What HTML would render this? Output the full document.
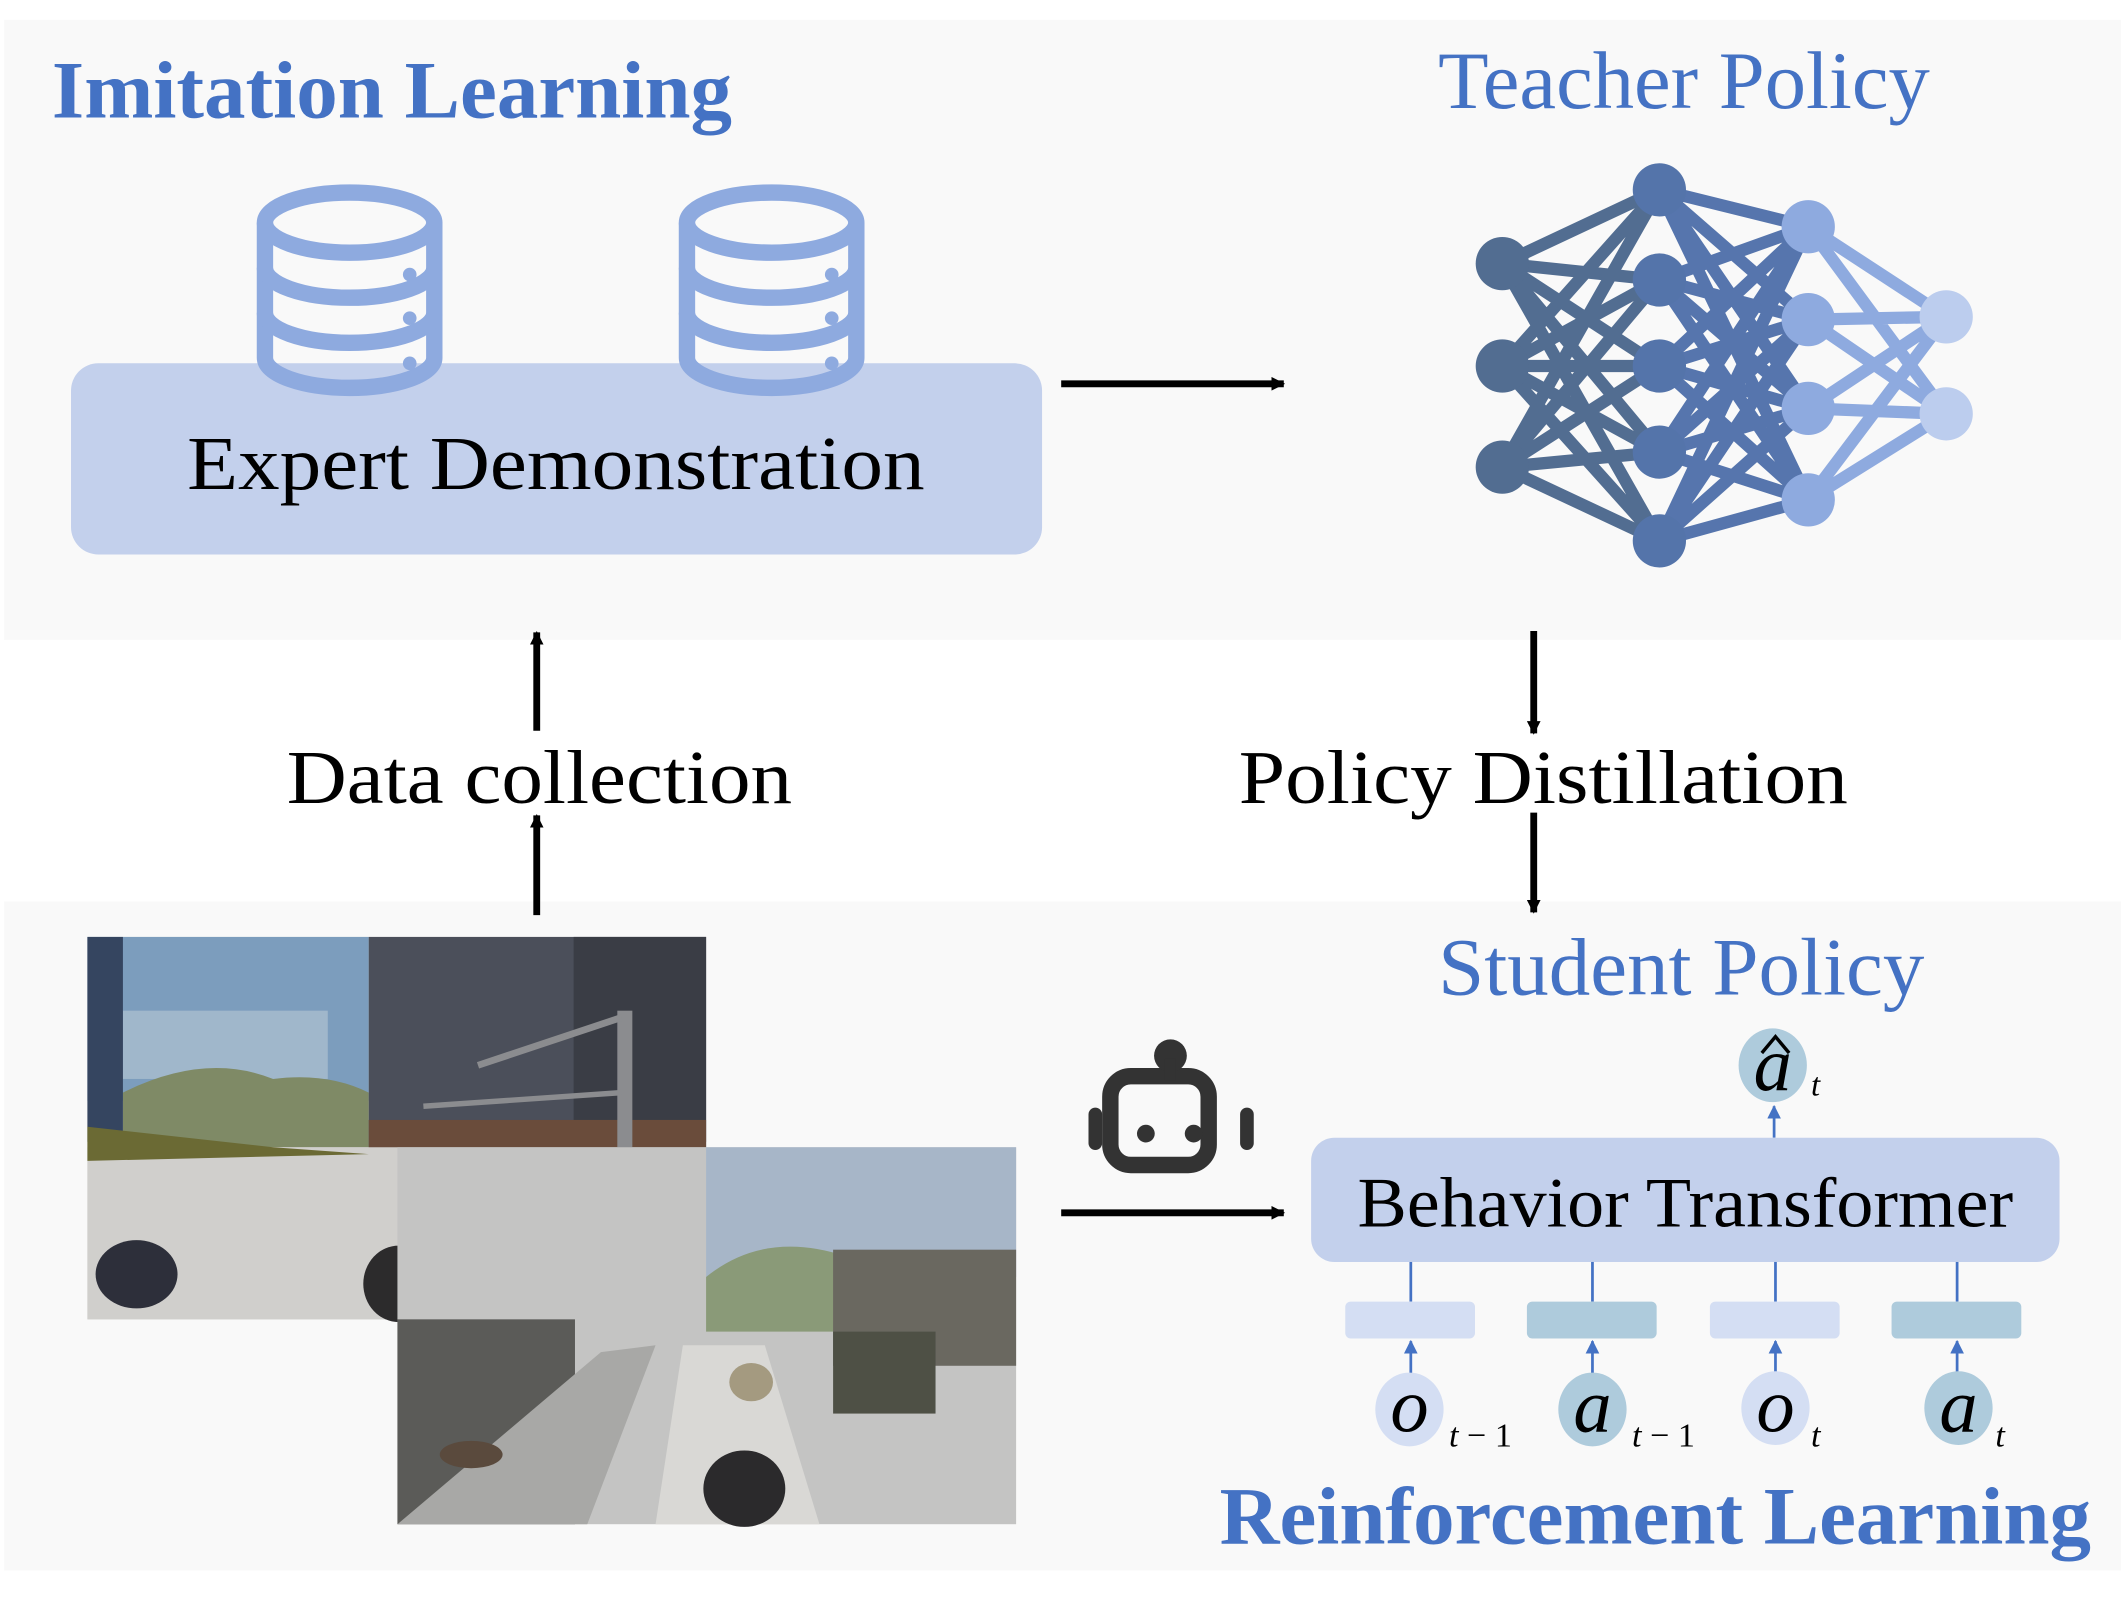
<!DOCTYPE html>
<html><head><meta charset="utf-8"><style>html,body{margin:0;padding:0;background:#fff}svg{display:block}</style></head><body>
<svg width="2121" height="1597" viewBox="0 0 1553 1169.3" preserveAspectRatio="none" xmlns="http://www.w3.org/2000/svg" font-family="'Liberation Serif', serif">
<defs>
<marker id="ah" markerWidth="10" markerHeight="10" refX="9" refY="5" orient="auto" markerUnits="userSpaceOnUse"><path d="M0,0 L10,5 L0,10 Z" fill="#000"/></marker>
<marker id="ahb" markerWidth="10" markerHeight="10" refX="9" refY="5" orient="auto" markerUnits="userSpaceOnUse"><path d="M0,0 L10,5 L0,10 Z" fill="#4472c4"/></marker>
</defs>
<rect width="1553" height="1170" fill="#fff"/>
<rect x="3" y="14.5" width="1550" height="454" fill="#f9f9f9"/>
<rect x="3" y="660" width="1550" height="490" fill="#f9f9f9"/>

<text x="38" y="86" font-size="60" font-weight="bold" fill="#4472c4" textLength="498" lengthAdjust="spacingAndGlyphs">Imitation Learning</text>
<text x="1053" y="79" font-size="60" fill="#4472c4" textLength="360" lengthAdjust="spacingAndGlyphs">Teacher Policy</text>

<rect x="52" y="266" width="711" height="140" rx="20" fill="#c3d0ec"/>

<!-- databases -->
<g fill="none" stroke="#8eaadf" stroke-width="12">
 <g id="db">
  <ellipse cx="256" cy="163" rx="62" ry="22"/>
  <path d="M194,163 V262 A62,22 0 0 0 318,262 V163"/>
  <path d="M194,196 A62,22 0 0 0 318,196"/>
  <path d="M194,229 A62,22 0 0 0 318,229"/>
 </g>
 <use href="#db" x="309"/>
</g>
<g fill="#8eaadf"><circle cx="300" cy="201" r="5"/><circle cx="300" cy="233" r="5"/><circle cx="300" cy="266" r="5"/><circle cx="609" cy="201" r="5"/><circle cx="609" cy="233" r="5"/><circle cx="609" cy="266" r="5"/></g>

<text x="407" y="358" font-size="56" text-anchor="middle" textLength="540" lengthAdjust="spacingAndGlyphs">Expert Demonstration</text>

<line x1="777" y1="281" x2="940" y2="281" stroke="#000" stroke-width="5" marker-end="url(#ah)"/>

<!-- neural net -->
<g stroke-width="9" stroke-linecap="round">
 <g stroke="#526d91">
  <path d="M1100,193 L1215,139 M1100,193 L1215,205 M1100,193 L1215,268 M1100,193 L1215,331 M1100,193 L1215,396 M1100,268 L1215,139 M1100,268 L1215,205 M1100,268 L1215,268 M1100,268 L1215,331 M1100,268 L1215,396 M1100,342 L1215,139 M1100,342 L1215,205 M1100,342 L1215,268 M1100,342 L1215,331 M1100,342 L1215,396"/>
 </g>
 <g stroke="#3a5fa0" opacity="0.85">
  <path d="M1215,139 L1324,166 M1215,139 L1324,234 M1215,139 L1324,299 M1215,139 L1324,366 M1215,205 L1324,166 M1215,205 L1324,234 M1215,205 L1324,299 M1215,205 L1324,366 M1215,268 L1324,166 M1215,268 L1324,234 M1215,268 L1324,299 M1215,268 L1324,366 M1215,331 L1324,166 M1215,331 L1324,234 M1215,331 L1324,299 M1215,331 L1324,366 M1215,396 L1324,166 M1215,396 L1324,234 M1215,396 L1324,299 M1215,396 L1324,366"/>
 </g>
 <g stroke="#8eaadf">
  <path d="M1324,166 L1425,232 M1324,166 L1425,303 M1324,234 L1425,232 M1324,234 L1425,303 M1324,299 L1425,232 M1324,299 L1425,303 M1324,366 L1425,232 M1324,366 L1425,303"/>
 </g>
</g>
<g fill="#526d91"><circle cx="1100" cy="193" r="19.5"/><circle cx="1100" cy="268" r="19.5"/><circle cx="1100" cy="342" r="19.5"/></g>
<g fill="#5474aa"><circle cx="1215" cy="139" r="19.5"/><circle cx="1215" cy="205" r="19.5"/><circle cx="1215" cy="268" r="19.5"/><circle cx="1215" cy="331" r="19.5"/><circle cx="1215" cy="396" r="19.5"/></g>
<g fill="#8eaadf"><circle cx="1324" cy="166" r="19.5"/><circle cx="1324" cy="234" r="19.5"/><circle cx="1324" cy="299" r="19.5"/><circle cx="1324" cy="366" r="19.5"/></g>
<g fill="#bccdee"><circle cx="1425" cy="232" r="19.5"/><circle cx="1425" cy="303" r="19.5"/></g>

<!-- middle arrows and labels -->
<line x1="393" y1="535" x2="393" y2="463" stroke="#000" stroke-width="5" marker-end="url(#ah)"/>
<line x1="393" y1="670" x2="393" y2="597" stroke="#000" stroke-width="5" marker-end="url(#ah)"/>
<text x="395" y="588" font-size="56" text-anchor="middle" textLength="370" lengthAdjust="spacingAndGlyphs">Data collection</text>
<line x1="1123" y1="462" x2="1123" y2="537" stroke="#000" stroke-width="5" marker-end="url(#ah)"/>
<line x1="1123" y1="595" x2="1123" y2="668" stroke="#000" stroke-width="5" marker-end="url(#ah)"/>
<text x="1130" y="588" font-size="56" text-anchor="middle" textLength="446" lengthAdjust="spacingAndGlyphs">Policy Distillation</text>

<!-- images -->
<g>
 <rect x="64" y="686" width="453" height="280" fill="#d2d1cf"/>
 <rect x="64" y="686" width="206" height="120" fill="#7c9dbd"/>
 <rect x="90" y="740" width="150" height="50" fill="#b9c8d4" opacity="0.6"/>
 <path d="M90,800 Q150,770 200,790 Q240,785 270,800 L270,840 L90,840 Z" fill="#7f8a66"/>
 <rect x="64" y="686" width="26" height="150" fill="#354560"/>
 <rect x="270" y="686" width="247" height="155" fill="#4b4f5a"/>
 <rect x="420" y="686" width="97" height="150" fill="#3a3d45"/>
 <rect x="270" y="820" width="247" height="22" fill="#6a4c3b"/>
 <path d="M64,840 L270,840 L517,840 L517,966 L64,966 Z" fill="#d0cfcc"/>
 <path d="M64,850 L270,845 L200,840 L64,825 Z" fill="#6b6a34"/>
 <rect x="452" y="740" width="11" height="226" fill="#8b8c8f"/>
 <path d="M350,780 L455,745" stroke="#8b8c8f" stroke-width="5"/>
 <path d="M310,810 L455,800" stroke="#8b8c8f" stroke-width="4"/>
 <ellipse cx="100" cy="933" rx="30" ry="25" fill="#2d2f3a"/>
 <ellipse cx="292" cy="940" rx="26" ry="28" fill="#2c2b2c"/>
 <ellipse cx="355" cy="870" rx="18" ry="8" fill="#2f3040"/>
 <ellipse cx="495" cy="867" rx="20" ry="9" fill="#30313a"/>
</g>
<g>
 <rect x="291" y="840" width="453" height="276" fill="#c4c4c3"/>
 <rect x="517" y="840" width="227" height="95" fill="#a7b6c8"/>
 <path d="M517,935 Q560,900 620,920 L620,975 L517,975 Z" fill="#8a9a78"/>
 <rect x="610" y="915" width="134" height="85" fill="#6a6860"/>
 <rect x="610" y="975" width="75" height="60" fill="#4e5045"/>
 <rect x="291" y="966" width="130" height="150" fill="#5b5b58"/>
 <path d="M291,1116 L440,990 L480,985 L430,1116 Z" fill="#a8a8a6"/>
 <path d="M480,1116 L500,985 L560,985 L600,1116 Z" fill="#d9d8d5"/>
 <ellipse cx="545" cy="1090" rx="30" ry="28" fill="#2b2a2c"/>
 <ellipse cx="550" cy="1012" rx="16" ry="14" fill="#a49a80"/>
 <ellipse cx="345" cy="1065" rx="23" ry="10" fill="#5a4a3d"/>
</g>

<!-- robot -->
<g fill="none" stroke="#333" stroke-width="12">
 <rect x="813" y="788" width="72" height="65" rx="15"/>
</g>
<g fill="#333">
 <circle cx="857" cy="773" r="12"/>
 <rect x="853" y="775" width="8" height="16"/>
 <rect x="797" y="811" width="10" height="31" rx="5"/>
 <rect x="908" y="811" width="10" height="31" rx="5"/>
 <circle cx="839" cy="830" r="6.5"/>
 <circle cx="874" cy="830" r="6.5"/>
</g>
<line x1="777" y1="888" x2="940" y2="888" stroke="#000" stroke-width="5" marker-end="url(#ah)"/>

<text x="1053" y="728" font-size="60" fill="#4472c4" textLength="356" lengthAdjust="spacingAndGlyphs">Student Policy</text>

<!-- a hat t -->
<ellipse cx="1298" cy="780" rx="25" ry="27" fill="#aecbdc"/>
<text x="1298" y="798" font-size="56" font-style="italic" text-anchor="middle">a</text>
<path d="M1290,771 L1300,759 L1310,771" fill="none" stroke="#000" stroke-width="2.5"/>
<text x="1326" y="802" font-size="24" font-style="italic">t</text>
<line x1="1299" y1="833" x2="1299" y2="810" stroke="#4472c4" stroke-width="2" marker-end="url(#ahb)"/>

<rect x="960" y="833" width="548" height="91" rx="17" fill="#c3d0ec"/>
<text x="1234" y="898" font-size="52" text-anchor="middle" textLength="480" lengthAdjust="spacingAndGlyphs">Behavior Transformer</text>

<!-- tokens -->
<g stroke="#4472c4" stroke-width="2">
 <line x1="1033" y1="924" x2="1033" y2="953"/><line x1="1166" y1="924" x2="1166" y2="953"/><line x1="1300" y1="924" x2="1300" y2="953"/><line x1="1433" y1="924" x2="1433" y2="953"/>
</g>
<rect x="985" y="953" width="95" height="27" rx="4" fill="#d4def3"/>
<rect x="1118" y="953" width="95" height="27" rx="4" fill="#aecbdc"/>
<rect x="1252" y="953" width="95" height="27" rx="4" fill="#d4def3"/>
<rect x="1385" y="953" width="95" height="27" rx="4" fill="#aecbdc"/>
<g stroke="#4472c4" stroke-width="2">
 <line x1="1033" y1="1006" x2="1033" y2="982" marker-end="url(#ahb)"/>
 <line x1="1166" y1="1006" x2="1166" y2="982" marker-end="url(#ahb)"/>
 <line x1="1300" y1="1006" x2="1300" y2="982" marker-end="url(#ahb)"/>
 <line x1="1433" y1="1006" x2="1433" y2="982" marker-end="url(#ahb)"/>
</g>
<ellipse cx="1032" cy="1032" rx="25" ry="27" fill="#d4def3"/>
<ellipse cx="1166" cy="1032" rx="25" ry="27" fill="#aecbdc"/>
<ellipse cx="1300" cy="1031" rx="25" ry="27" fill="#d4def3"/>
<ellipse cx="1434" cy="1031" rx="25" ry="27" fill="#aecbdc"/>
<g font-size="56" font-style="italic" text-anchor="middle">
 <text x="1032" y="1048">o</text><text x="1166" y="1048">a</text><text x="1300" y="1048">o</text><text x="1434" y="1048">a</text>
</g>
<g font-size="25">
 <text x="1061" y="1059"><tspan font-style="italic">t</tspan> − 1</text><text x="1195" y="1059"><tspan font-style="italic">t</tspan> − 1</text><text x="1326" y="1059" font-style="italic">t</text><text x="1461" y="1059" font-style="italic">t</text>
</g>

<text x="893" y="1130" font-size="60" font-weight="bold" fill="#4472c4" textLength="638" lengthAdjust="spacingAndGlyphs">Reinforcement Learning</text>
</svg>
</body></html>
